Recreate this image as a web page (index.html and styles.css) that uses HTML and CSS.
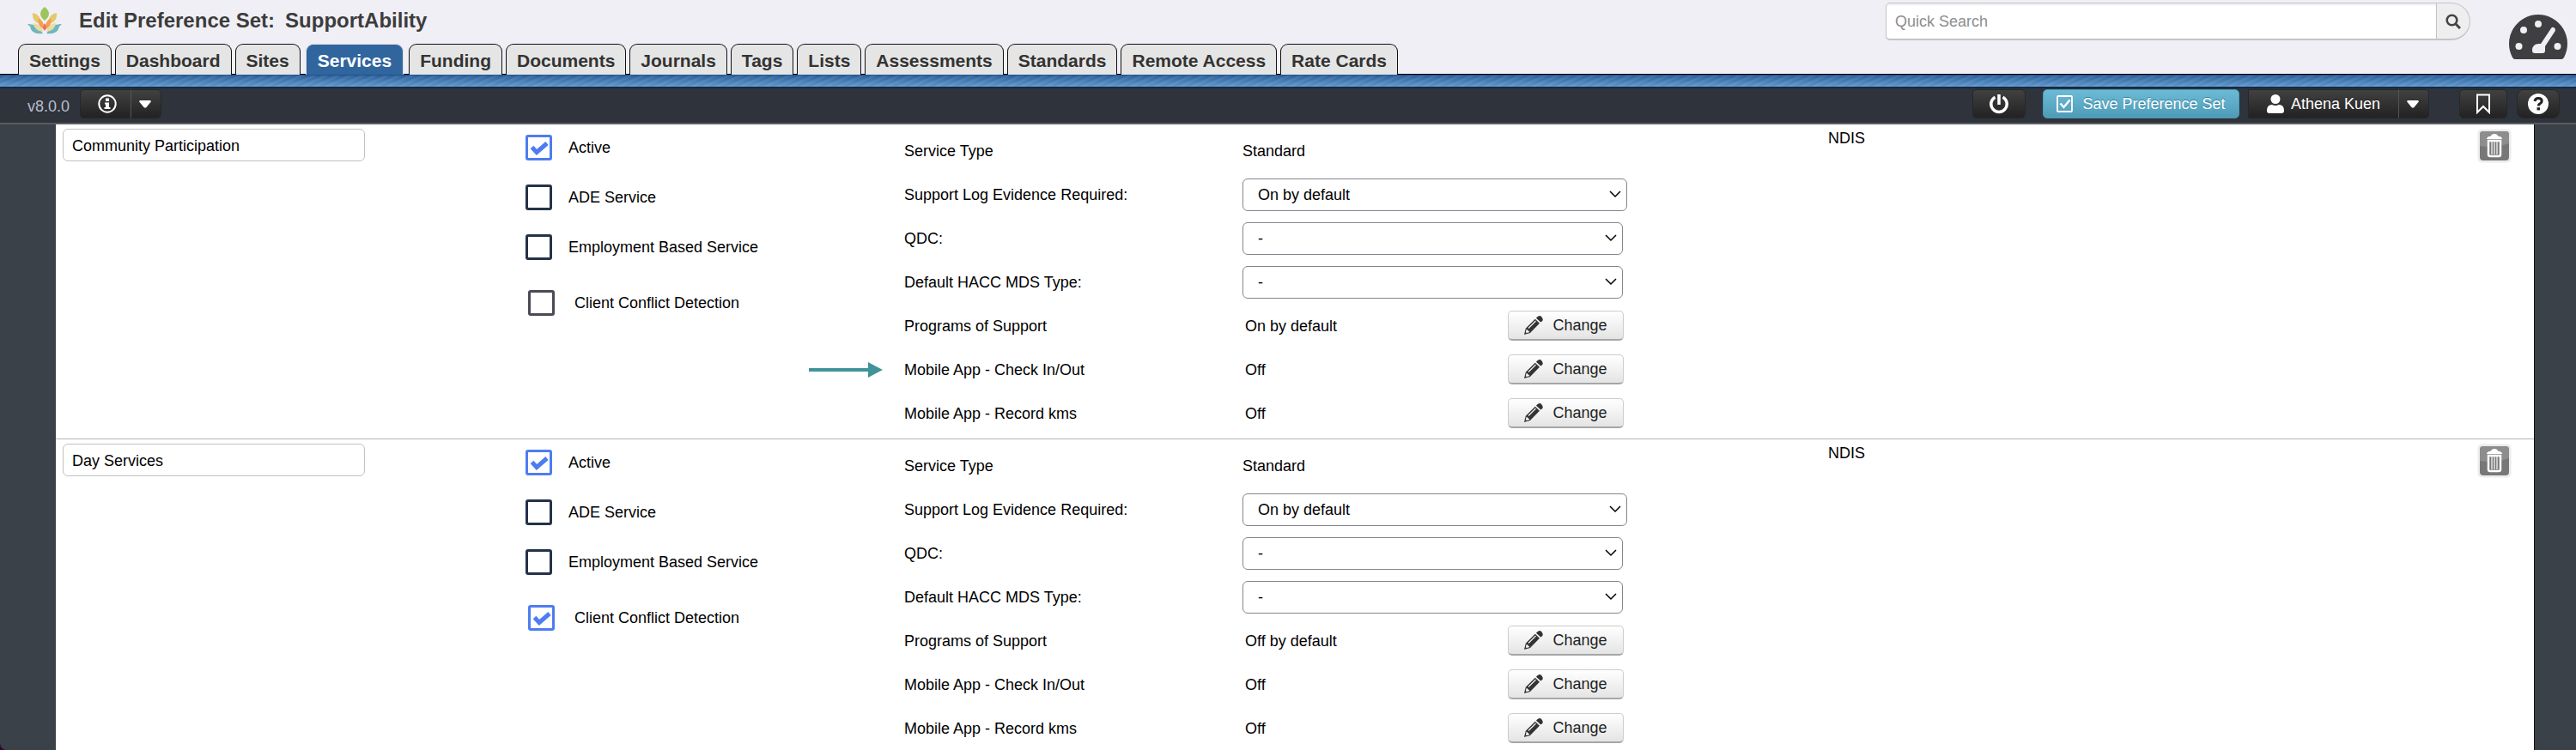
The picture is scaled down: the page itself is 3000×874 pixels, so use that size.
FILE: index.html
```html
<!DOCTYPE html>
<html lang="en">
<head>
<meta charset="utf-8">
<title>Edit Preference Set: SupportAbility</title>
<link rel="stylesheet" href="styles.css">
</head>
<body>
<svg class="sprite" aria-hidden="true">
  <symbol id="pencil" viewBox="0 0 22 22">
    <path fill="#333" d="M15 1.5 17 .3Q19.500-.5 21 2.200T21 6.200L19.300 7.600 14 2.700ZM12.800 3.800 18 8.800 7 20 0 22 1.800 14.800Z"/>
    <path fill="none" stroke="#f4f4f4" stroke-width="1.200" d="M5 14.500 13.500 6"/>
    <path fill="#f4f4f4" d="M2.700 15.500 6.500 19 2.500 20 2 19Z"/>
  </symbol>
  <symbol id="trash" viewBox="0 0 40 40">
    <rect x=".5" y=".5" width="39" height="39" rx="5" fill="#ececec"/>
    <rect x="3" y="3" width="34" height="34" rx="4" fill="#777"/>
    <path d="M3 7q0-4 4-4h26q4 0 4 4v10Q20 23 3 20Z" fill="#8d8d8d"/>
    <path d="M11 12q0-3 5-3.500Q16.500 6 20 6t4 2.500q5 .5 5 3.500Z" fill="#fff"/>
    <path d="M13 14h14v16q0 2-2 2H15q-2 0-2-2Z" fill="#777" stroke="#fff" stroke-width="2.500"/>
    <path d="M17 15v15M20 15v15M23 15v15" stroke="#e4e4e4" stroke-width="1.500"/>
  </symbol>
  <symbol id="caret" viewBox="0 0 14 9"><path d="M1 0h12q1.500 1 0 2.500L8.500 8q-1.500 1.500-3 0L1 2.500Q-.5 1 1 0Z" fill="#fff"/></symbol>
</svg>

<header class="header">
  <div class="header-main">
    <h1 class="title">
      <svg class="logo" viewBox="0 0 40 32" aria-hidden="true">
        <path d="M20 0Q30 8 20 16 10 8 20 0Z" fill="#9cc65c"/>
        <path d="M6 7q9 1 10 13Q5 18 6 7ZM34 7q-9 1-10 13Q35 18 34 7Z" fill="#e3c96c"/>
        <path d="M13 13q7 4 6 13-8-3-6-13ZM27 13q-7 4-6 13 8-3 6-13Z" fill="#f6a04d"/>
        <path d="M0 20q11-1 18 11Q5 33 3 23ZM40 20Q29 19 22 31q13 2 15-8Z" fill="#6fb7bd"/>
        <path d="M7 19q9 1 11 10Q8 28 7 19ZM33 19q-9 1-11 10 10-1 11-10Z" fill="#e8dca0"/>
        <path d="M20 19q4 5 0 9-4-4 0-9Z" fill="#e8736d"/>
      </svg>
      <span>Edit Preference Set:</span>
      <span>SupportAbility</span>
    </h1>
    <nav class="tabs">
      <a class="tab" href="#">Settings</a>
      <a class="tab" href="#">Dashboard</a>
      <a class="tab" href="#">Sites</a>
      <a class="tab active" href="#" aria-current="page">Services</a>
      <a class="tab" href="#">Funding</a>
      <a class="tab" href="#">Documents</a>
      <a class="tab" href="#">Journals</a>
      <a class="tab" href="#">Tags</a>
      <a class="tab" href="#">Lists</a>
      <a class="tab" href="#">Assessments</a>
      <a class="tab" href="#">Standards</a>
      <a class="tab" href="#">Remote Access</a>
      <a class="tab" href="#">Rate Cards</a>
    </nav>
  </div>
  <form class="search">
    <input class="search-input" type="text" placeholder="Quick Search" aria-label="Quick Search">
    <button class="search-button" type="button" aria-label="Search">
      <svg width="18" height="18" viewBox="0 0 18 18"><circle cx="7.500" cy="7.500" r="5.800" fill="none" stroke="#444" stroke-width="2.600"/><path d="m12 12 5 5" stroke="#444" stroke-width="3"/></svg>
    </button>
  </form>
  <a class="gauge" href="#" aria-label="Dashboard home">
    <svg width="68" height="53" viewBox="0 0 68 53">
      <path d="M7 53Q5 53 4 51A34 34 0 1 1 64 51Q63 53 61 53Z" fill="#3f3f41"/>
      <g fill="#f0eff5"><circle cx="34" cy="12" r="4"/><circle cx="17" cy="19" r="4"/><circle cx="11.500" cy="38" r="4"/><circle cx="56.500" cy="38" r="4"/>
      <path d="M49 17q1.500-2 3.500-.8t1.300 3.800L42 38v5q0 3-3 3H30q-3 0-3-3 0-8 8-8h2Z"/></g>
    </svg>
  </a>
</header>
<div class="stripe"></div>

<div class="toolbar">
  <span class="version">v8.0.0</span>
  <div class="group">
    <button class="dark-button info" type="button" aria-label="Information">
      <svg width="22" height="22" viewBox="0 0 22 22"><circle cx="11" cy="11" r="9.700" fill="none" stroke="#fff" stroke-width="2"/><path d="M9 4.500h4V8H9ZM8 9.500h5V15h1.500v2H7.500v-2H9v-3.500H8Z" fill="#fff"/></svg>
    </button>
    <button class="dark-button more" type="button" aria-label="Version options"><svg width="14" height="9"><use href="#caret"/></svg></button>
  </div>
  <button class="dark-button power" type="button" aria-label="Log out">
    <svg width="22" height="24" viewBox="0 0 22 24" fill="none" stroke="#fff" stroke-width="3.500"><path d="M6.500 4.200A9.200 9.200 0 1 0 15.500 4.200M11 1v12"/></svg>
  </button>
  <button class="save" type="button">
    <svg width="20" height="22" viewBox="0 0 20 22" fill="none" stroke="#fff"><rect x="1" y="2" width="17" height="18" rx="1" stroke-width="1.800"/><path d="m4.500 10.500 4 4.500L15.500 6.500" stroke-width="2.400"/></svg>
    <span>Save Preference Set</span>
  </button>
  <div class="group user-group">
    <button class="dark-button user" type="button">
      <svg width="20" height="22" viewBox="0 0 20 22" fill="#fff"><circle cx="10" cy="5.500" r="5.500"/><path d="M0 19q0-7 6-7 4 2 8 0 6 0 6 7 0 3-3 3H3q-3 0-3-3Z"/></svg>
      <span>Athena Kuen</span>
    </button>
    <button class="dark-button more" type="button" aria-label="User menu"><svg width="14" height="9"><use href="#caret"/></svg></button>
  </div>
  <button class="dark-button bookmark" type="button" aria-label="Bookmark">
    <svg width="18" height="24" viewBox="0 0 18 24"><path d="M2 1.500h14V22l-7-7-7 7Z" fill="none" stroke="#fff" stroke-width="2"/></svg>
  </button>
  <button class="dark-button help" type="button" aria-label="Help">
    <svg width="24" height="24" viewBox="0 0 24 24"><circle cx="12" cy="12" r="12" fill="#fff"/><path d="M8 9q.5-3.500 4.200-3.500 4 0 4 3.200 0 2-2.200 3.100-1.700.8-1.700 2.700" fill="none" stroke="#222" stroke-width="3"/><path d="M10.500 16.200h3.500v3.200h-3.500Z" fill="#222"/></svg>
  </button>
</div>

<main class="services">
  <section class="service">
    <div><input class="name" type="text" value="Community Participation" aria-label="Service name"></div>
    <div class="checks">
      <label class="check"><input type="checkbox" checked>Active</label>
      <label class="check"><input type="checkbox">ADE Service</label>
      <label class="check"><input type="checkbox">Employment Based Service</label>
      <label class="check conflict"><input type="checkbox">Client Conflict Detection</label>
    </div>
    <div class="details">
      <div class="detail"><span>Service Type</span><span>Standard</span></div>
      <div class="detail"><label for="log1">Support Log Evidence Required:</label><select class="wide" id="log1"><option>On by default</option></select></div>
      <div class="detail"><label for="qdc1">QDC:</label><select id="qdc1"><option>-</option></select></div>
      <div class="detail"><label for="hacc1">Default HACC MDS Type:</label><select id="hacc1"><option>-</option></select></div>
      <div class="detail"><span>Programs of Support</span><div class="setting"><span>On by default</span><button class="change" type="button"><svg width="22" height="22"><use href="#pencil"/></svg>Change</button></div></div>
      <div class="detail">
        <span class="pointed">Mobile App - Check In/Out
          <svg class="arrow" width="86" height="18" viewBox="0 0 86 18" aria-hidden="true"><path d="M0 7h69V0l17 9-17 9v-7H0Z" fill="#3f9499"/></svg>
        </span>
        <div class="setting"><span>Off</span><button class="change" type="button"><svg width="22" height="22"><use href="#pencil"/></svg>Change</button></div>
      </div>
      <div class="detail"><span>Mobile App - Record kms</span><div class="setting"><span>Off</span><button class="change" type="button"><svg width="22" height="22"><use href="#pencil"/></svg>Change</button></div></div>
    </div>
    <div class="funding"><span>NDIS</span><button class="delete" type="button" aria-label="Delete Community Participation"><svg width="40" height="40"><use href="#trash"/></svg></button></div>
  </section>

  <section class="service">
    <div><input class="name" type="text" value="Day Services" aria-label="Service name"></div>
    <div class="checks">
      <label class="check"><input type="checkbox" checked>Active</label>
      <label class="check"><input type="checkbox">ADE Service</label>
      <label class="check"><input type="checkbox">Employment Based Service</label>
      <label class="check conflict"><input type="checkbox" checked>Client Conflict Detection</label>
    </div>
    <div class="details">
      <div class="detail"><span>Service Type</span><span>Standard</span></div>
      <div class="detail"><label for="log2">Support Log Evidence Required:</label><select class="wide" id="log2"><option>On by default</option></select></div>
      <div class="detail"><label for="qdc2">QDC:</label><select id="qdc2"><option>-</option></select></div>
      <div class="detail"><label for="hacc2">Default HACC MDS Type:</label><select id="hacc2"><option>-</option></select></div>
      <div class="detail"><span>Programs of Support</span><div class="setting"><span>Off by default</span><button class="change" type="button"><svg width="22" height="22"><use href="#pencil"/></svg>Change</button></div></div>
      <div class="detail"><span>Mobile App - Check In/Out</span><div class="setting"><span>Off</span><button class="change" type="button"><svg width="22" height="22"><use href="#pencil"/></svg>Change</button></div></div>
      <div class="detail"><span>Mobile App - Record kms</span><div class="setting"><span>Off</span><button class="change" type="button"><svg width="22" height="22"><use href="#pencil"/></svg>Change</button></div></div>
    </div>
    <div class="funding"><span>NDIS</span><button class="delete" type="button" aria-label="Delete Day Services"><svg width="40" height="40"><use href="#trash"/></svg></button></div>
  </section>
</main>
</body>
</html>
```

FILE: styles.css
```css
* {
  box-sizing: border-box;
}

html {
  background: #2a0a33;
}

body {
  display: flex;
  flex-direction: column;
  min-height: 100vh;
  margin: 0;
  overflow-x: hidden;
  border-bottom-left-radius: 8px;
  background: #3a4148;
  color: #000;
  font: 18px/20px "Liberation Sans", Arial, sans-serif;
}

button,
input,
select {
  margin: 0;
  font: inherit;
  color: inherit;
}

button {
  display: flex;
  align-items: center;
  justify-content: center;
  cursor: pointer;
}

.sprite {
  display: none;
}

/* Header */
.header {
  display: flex;
  align-items: flex-start;
  height: 87px;
  padding-right: 10px;
  border-bottom: 1px solid #000;
  background: #f0eff5;
}

.header-main {
  flex: 1;
}

.title {
  display: flex;
  align-items: center;
  height: 51px;
  margin: 0;
  padding: 0 0 3px 32px;
  gap: 12px;
  color: #3c3c3c;
  font-size: 24px;
  line-height: 28px;
}

.logo {
  width: 40px;
  height: 32px;
  margin-right: 8px;
}

.tabs {
  display: flex;
  gap: 4px;
  padding-left: 21px;
}

.tab {
  height: 36px;
  padding: 0 12px;
  border: 1px solid #111;
  border-bottom: 0;
  border-radius: 9px 9px 0 0;
  background: #e5e5e5;
  color: #333;
  font-size: 21px;
  font-weight: bold;
  line-height: 38px;
  text-decoration: none;
  white-space: nowrap;
}

.tab.active {
  margin: 0 2px;
  padding: 0 13px;
  border-color: #dcdee3;
  background: #30659e;
  color: #fff;
}

.search {
  display: flex;
  width: 681px;
  height: 44px;
  margin: 3px 45px 0 0;
}

.search-input {
  flex: 1;
  min-width: 0;
  padding: 0 10px;
  border: 1px solid #c4c4c4;
  border-bottom-width: 2px;
  border-radius: 5px 0 0 5px;
  background: #fff;
  box-shadow: inset 0 2px 2px #eee;
}

.search-input::placeholder {
  color: #8e8e8e;
  opacity: 1;
}

.search-button {
  width: 39px;
  padding: 0;
  border: 1px solid #c4c4c4;
  border-bottom-width: 2px;
  border-left: 0;
  border-radius: 0 22px 22px 0;
  background: #eee;
}

.gauge {
  display: block;
  height: 53px;
  margin-top: 16px;
}

.stripe {
  height: 16px;
  border-top: 1px solid #1c5590;
  border-bottom: 2px solid #132a45;
  background:
    repeating-linear-gradient(155deg, transparent 0 3px, rgba(255, 255, 255, 0.07) 3px 6px),
    linear-gradient(#2c609a, #5f97cc);
}

/* Toolbar */
.toolbar {
  display: flex;
  align-items: flex-start;
  height: 42px;
  padding: 1px 19px 0 32px;
  border-bottom: 2px solid #5b5c5f;
  background: #2f333b;
}

.version {
  width: 61px;
  color: #b9bdcb;
  line-height: 40px;
}

.group {
  display: flex;
}

.dark-button,
.save {
  height: 34px;
  padding: 0;
  border: 1px solid #25272b;
  border-radius: 5px;
  background: linear-gradient(#414141, #222);
  color: #fff;
  text-shadow: 0 -1px 0 #222;
}

.info {
  width: 60px;
  padding-left: 3px;
  border-right-color: #555;
  border-radius: 5px 0 0 5px;
}

.more {
  width: 35px;
  padding-right: 2px;
  border-left: 0;
  border-radius: 0 5px 5px 0;
}

.power {
  width: 62px;
  margin-left: auto;
}

.save {
  width: 229px;
  margin: 0 10px 0 20px;
  gap: 10px;
  border-color: #4d9ab6;
  background: linear-gradient(#6cbbd6, #4e9bb7);
  text-shadow: 0 -1px 0 #337d98;
  white-space: nowrap;
}

.user-group {
  margin-right: 35px;
}

.user {
  width: 176px;
  gap: 8px;
  border-right-color: #555;
  border-radius: 2px 0 0 2px;
}

.bookmark {
  width: 56px;
  margin-right: 11px;
}

.help {
  width: 50px;
  border-radius: 8px;
}

/* Services */
.services {
  flex: 1;
  margin: 0 48px 0 65px;
  border-right: 1px solid #111;
  background: #fff;
}

.service {
  display: grid;
  grid-template-columns: 539fr 441fr 1076fr 822fr;
  padding: 5px 0 4px 8px;
  border-bottom: 1px solid #b5b5b5;
}

.service:last-child {
  padding-bottom: 0;
  border-bottom: 0;
}

.name {
  width: 352px;
  height: 38px;
  padding: 2px 10px 0;
  border: 1px solid #c2c2c2;
  border-radius: 6px;
  background: #fff;
}

.checks {
  display: flex;
  flex-direction: column;
  align-items: flex-start;
  gap: 28px;
  padding-top: 7px;
}

.check {
  display: flex;
  align-items: center;
  gap: 19px;
}

.check input {
  appearance: none;
  width: 31px;
  height: 30px;
  border: 3px solid #253248;
  border-radius: 3px;
  background: #fff;
}

.check input:checked {
  border-color: #4d7df0;
  background: #fff url("data:image/svg+xml,%3Csvg xmlns='http://www.w3.org/2000/svg' viewBox='0 0 24 24'%3E%3Cpath d='m3.500 11.500 5.500 6L21 7' fill='none' stroke='%234d7df0' stroke-width='5'/%3E%3C/svg%3E") center / 24px 24px no-repeat;
}

.check.conflict {
  gap: 23px;
  padding: 7px 0 0 3px;
}

.check.conflict input:not(:checked) {
  border-color: #4b4a55;
}

.detail {
  display: grid;
  grid-template-columns: 394px 1fr;
  align-items: center;
  height: 51px;
}

.detail select {
  appearance: none;
  width: 443px;
  height: 38px;
  padding: 0 36px 0 17px;
  border: 1px solid #85858f;
  border-radius: 6px;
  background: #fff url("data:image/svg+xml,%3Csvg xmlns='http://www.w3.org/2000/svg' viewBox='0 0 14 9'%3E%3Cpath d='m1 1 6 6 6-6' fill='none' stroke='%23000' stroke-width='1.500'/%3E%3C/svg%3E") right 6px center / 14px 9px no-repeat;
}

.detail select.wide {
  width: 448px;
}

.setting {
  display: flex;
  align-items: center;
  justify-content: space-between;
  width: 444px;
  padding-left: 3px;
}

.change {
  width: 135px;
  height: 35px;
  padding: 0;
  gap: 11px;
  border: 1px solid #ccc;
  border-bottom: 2px solid #a6a6a6;
  border-radius: 5px;
  background: linear-gradient(#fff, #e4e4e4);
  color: #222;
}

.pointed {
  position: relative;
}

.arrow {
  position: absolute;
  top: 1px;
  left: -111px;
}

.funding {
  display: flex;
  align-items: flex-start;
  justify-content: space-between;
  padding-right: 26px;
  line-height: 22px;
}

.delete {
  padding: 0;
  border: 0;
  background: none;
}
```
